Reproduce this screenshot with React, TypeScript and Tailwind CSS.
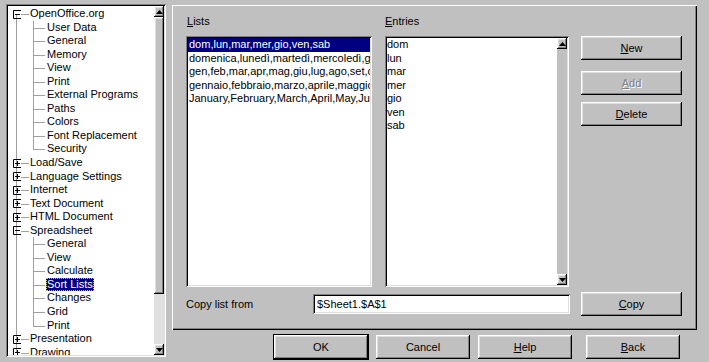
import React from "react";

const raised =
  "bg-[#c0c0c0] shadow-[inset_-1px_-1px_#000,inset_1px_1px_#fff,inset_-2px_-2px_#808080,inset_2px_2px_#dfdfdf]";
const sunken =
  "shadow-[inset_1px_1px_#808080,inset_-1px_-1px_#fff,inset_2px_2px_#000,inset_-2px_-2px_#dfdfdf]";

function Btn({
  children,
  className = "",
  disabled = false,
  def = false,
}: {
  children: React.ReactNode;
  className?: string;
  disabled?: boolean;
  def?: boolean;
}) {
  return (
    <div
      className={`${raised} ${def ? "outline outline-1 outline-black" : ""} flex items-center justify-center h-[24px] ${
        disabled ? "text-[#808080] [text-shadow:1px_1px_0_#fff]" : "text-black"
      } ${className}`}
    >
      {children}
    </div>
  );
}

function Arrow({ up }: { up: boolean }) {
  return (
    <div className={`${raised} w-full h-[11px] flex items-center justify-center`}>
      <svg width="7" height="4" viewBox="0 0 7 4">
        {up ? <path d="M3.5 0 L7 4 L0 4 Z" fill="#000" /> : <path d="M0 0 L7 0 L3.5 4 Z" fill="#000" />}
      </svg>
    </div>
  );
}

type Row = { label: string; level: 0 | 1; kind?: "minus" | "plus"; last?: boolean; first?: boolean; selected?: boolean; lastTop?: boolean };

const rows: Row[] = [
  { label: "OpenOffice.org", level: 0, kind: "minus", first: true },
  { label: "User Data", level: 1 },
  { label: "General", level: 1 },
  { label: "Memory", level: 1 },
  { label: "View", level: 1 },
  { label: "Print", level: 1 },
  { label: "External Programs", level: 1 },
  { label: "Paths", level: 1 },
  { label: "Colors", level: 1 },
  { label: "Font Replacement", level: 1 },
  { label: "Security", level: 1, last: true },
  { label: "Load/Save", level: 0, kind: "plus" },
  { label: "Language Settings", level: 0, kind: "plus" },
  { label: "Internet", level: 0, kind: "plus" },
  { label: "Text Document", level: 0, kind: "plus" },
  { label: "HTML Document", level: 0, kind: "plus" },
  { label: "Spreadsheet", level: 0, kind: "minus" },
  { label: "General", level: 1 },
  { label: "View", level: 1 },
  { label: "Calculate", level: 1 },
  { label: "Sort Lists", level: 1, selected: true },
  { label: "Changes", level: 1 },
  { label: "Grid", level: 1 },
  { label: "Print", level: 1, last: true },
  { label: "Presentation", level: 0, kind: "plus" },
  { label: "Drawing", level: 0, kind: "plus", lastTop: true },
];

function ExpBox({ kind }: { kind: "minus" | "plus" }) {
  return (
    <svg width="9" height="9" viewBox="0 0 9 9" className="absolute left-[5px] top-[2.5px]">
      <path d="M8 0.5 H0.5 V8.5 H8" stroke="#000" strokeWidth="1" fill="none" />
      <path d="M2 4.5 H7" stroke="#000" strokeWidth="1" />
      {kind === "plus" && <path d="M4.5 2 V7" stroke="#000" strokeWidth="1" />}
    </svg>
  );
}

function TreeRow({ r }: { r: Row }) {
  const line = "absolute bg-[#a0a0a0]";
  return (
    <div className="relative h-[13.56px] flex items-center">
      {/* level 0 vertical line */}
      <span
        className={`${line} left-[8px] w-[1px] ${
          r.first ? "top-[7px] bottom-0" : r.lastTop ? "top-0 h-[7px]" : "top-0 bottom-0"
        }`}
      />
      {r.level === 0 ? (
        <>
          <span className={`${line} left-[13px] w-[8px] h-[1px] top-[7px]`} />
          <ExpBox kind={r.kind!} />
          <span className="absolute left-[22px] top-0 leading-[13.56px] whitespace-nowrap">{r.label}</span>
        </>
      ) : (
        <>
          <span className={`${line} left-[25px] w-[1px] top-0 ${r.last ? "h-[7px]" : "bottom-0"}`} />
          <span className={`${line} left-[25px] w-[12px] h-[1px] top-[7px]`} />
          <span
            className={`absolute left-[38px] top-[0px] h-[13.56px] leading-[13.56px] px-[1px] whitespace-nowrap ${
              r.selected ? "bg-[#000080] text-white outline outline-1 outline-dotted outline-[#c0c080] -outline-offset-1" : ""
            }`}
          >
            {r.label}
          </span>
        </>
      )}
    </div>
  );
}

export default function App() {
  const lists = [
    "dom,lun,mar,mer,gio,ven,sab",
    "domenica,lunedì,martedì,mercoledì,giovedì,venerdì,sabato",
    "gen,feb,mar,apr,mag,giu,lug,ago,set,ott,nov,dic",
    "gennaio,febbraio,marzo,aprile,maggio,giugno,luglio",
    "January,February,March,April,May,June,July",
  ];
  const entries = ["dom", "lun", "mar", "mer", "gio", "ven", "sab"];

  return (
    <div
      className="w-[709px] h-[362px] bg-[#c0c0c0] flex items-start pt-[4px] pl-[6px] text-[11px] text-black overflow-hidden"
      style={{ fontFamily: '"Liberation Sans", Arial, sans-serif' }}
    >
      {/* Tree panel */}
      <div className={`w-[160px] h-[353px] shrink-0 bg-white ${sunken} p-[2px] flex`}>
        <div className="flex-1 h-full overflow-hidden pt-[1px]">
          {rows.map((r, i) => (
            <TreeRow key={i} r={r} />
          ))}
        </div>
        <div className="w-[10px] h-full flex flex-col bg-[#e0e0e0]">
          <Arrow up />
          <div className={`${raised} h-[277px]`} />
          <div className="flex-1" />
          <Arrow up={false} />
        </div>
      </div>

      {/* Right side */}
      <div className="ml-[6px] w-[525px] flex flex-col">
        <div className="h-[325px] mt-[1px] shadow-[inset_1px_1px_#fff,inset_-1px_-1px_#000,inset_-2px_-2px_#808080] pl-[14px] pt-[10px] flex flex-col">
          <div className="flex">
            <div className="w-[186px] flex flex-col">
              <div className="h-[13px] leading-[13px] pl-[1px] mb-[8px]">
                <u>L</u>ists
              </div>
              <div className={`h-[251px] bg-white ${sunken} p-[2px] overflow-hidden`}>
                {lists.map((l, i) => (
                  <div
                    key={i}
                    className={`h-[13.56px] leading-[13.56px] whitespace-nowrap overflow-hidden px-[1px] ${
                      i === 0 ? "bg-[#000080] text-white" : ""
                    }`}
                  >
                    {l}
                  </div>
                ))}
              </div>
            </div>
            <div className="w-[184px] ml-[13px] flex flex-col">
              <div className="h-[13px] leading-[13px] mb-[8px]">
                <u>E</u>ntries
              </div>
              <div className={`h-[251px] bg-white ${sunken} p-[2px] flex`}>
                <div className="flex-1 overflow-hidden">
                  {entries.map((e, i) => (
                    <div key={i} className="h-[13.56px] leading-[13.56px]">
                      {e}
                    </div>
                  ))}
                </div>
                <div className="w-[10px] h-full flex flex-col bg-[#c0c0c0]">
                  <Arrow up />
                  <div className="flex-1" />
                  <Arrow up={false} />
                </div>
              </div>
            </div>
            <div className="w-[101px] ml-[12px] flex flex-col pt-[21px]">
              <Btn>
                <u>N</u>ew
              </Btn>
              <Btn disabled className="mt-[11px]">
                <u>A</u>dd
              </Btn>
              <Btn className="mt-[7px]">
                <u>D</u>elete
              </Btn>
            </div>
          </div>
          <div className="flex items-center mt-[5px]">
            <div className="w-[127px]">Copy list from</div>
            <div className={`w-[257px] h-[20px] bg-white ${sunken} px-[4px] leading-[20px]`}>$Sheet1.$A$1</div>
            <Btn className="w-[101px] ml-[11px]">
              <u>C</u>opy
            </Btn>
          </div>
        </div>
        <div className="flex mt-[5px] pl-[102px]">
          <Btn def className="w-[94px]">
            OK
          </Btn>
          <Btn className="w-[94px] ml-[8px]">Cancel</Btn>
          <Btn className="w-[94px] ml-[8px]">
            <u>H</u>elp
          </Btn>
          <Btn className="w-[94px] ml-[14px]">
            <u>B</u>ack
          </Btn>
        </div>
      </div>
    </div>
  );
}
